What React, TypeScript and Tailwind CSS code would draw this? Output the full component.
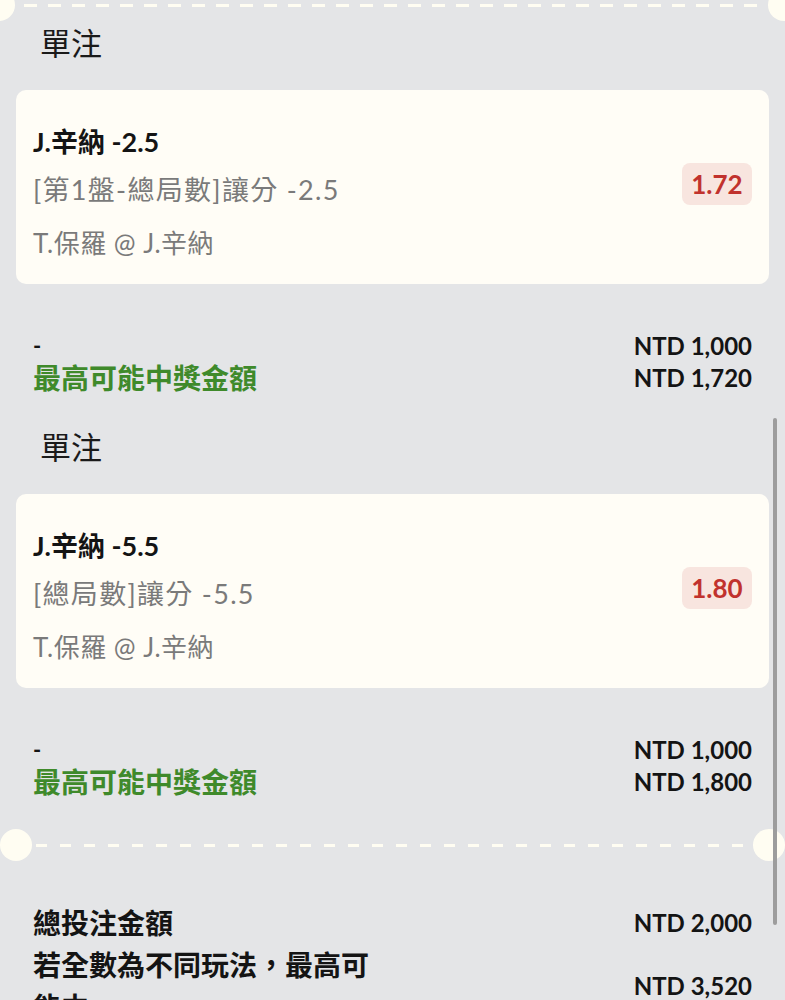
import React from 'react'

const FONT = { fontFamily: 'Lato, "Noto Sans CJK TC", sans-serif' }

interface Bet {
  pick: string
  market: string
  event: string
  odds: string
  stake: string
  payout: string
}

const BETS: Bet[] = [
  {
    pick: 'J.辛納 -2.5',
    market: '[第1盤-總局數]讓分 -2.5',
    event: 'T.保羅 @ J.辛納',
    odds: '1.72',
    stake: 'NTD 1,000',
    payout: 'NTD 1,720',
  },
  {
    pick: 'J.辛納 -5.5',
    market: '[總局數]讓分 -5.5',
    event: 'T.保羅 @ J.辛納',
    odds: '1.80',
    stake: 'NTD 1,000',
    payout: 'NTD 1,800',
  },
]

function Circle() {
  return <div className="h-[32px] w-[32px] flex-none rounded-full bg-[#fffdf2]" />
}

function BetSection({ bet, first }: { bet: Bet; first: boolean }) {
  return (
    <section className={first ? 'pt-[2px]' : 'pt-[33px]'}>
      <h2 className="pl-[24px] text-[31px] leading-[40px] text-[#1a1a1a]">單注</h2>
      <div className="mt-[27px] flex items-center justify-between rounded-[10px] bg-[#fffdf6] pl-[17px] pr-[17px] pt-[36px] pb-[21px]">
        <div>
          <p className="text-[27px] font-bold leading-[32px] text-[#141414]">{bet.pick}</p>
          <p className="mt-[12px] text-[27px] leading-[40px] tracking-[1.3px] text-[#7a7a7a]">{bet.market}</p>
          <p className="mt-[13px] text-[26px] leading-[40px] tracking-[0.5px] text-[#7a7a7a]">{bet.event}</p>
        </div>
        <span className="mb-[21px] flex h-[42px] w-[70px] items-center justify-center rounded-[8px] bg-[#f8e5df] text-[26px] font-bold text-[#c1322d]">
          {bet.odds}
        </span>
      </div>
      <div className="mt-[46px] grid grid-cols-[1fr_auto] px-[17px] font-bold leading-[32px]">
        <span className="text-[22px] text-[#141414]">-</span>
        <span className="text-right text-[24px] text-[#141414]">{bet.stake}</span>
        <span className="text-[28px] text-[#3f8a2b]">最高可能中獎金額</span>
        <span className="text-right text-[24px] text-[#141414]">{bet.payout}</span>
      </div>
    </section>
  )
}

export default function App() {
  return (
    <div className="relative h-[1000px] w-[785px] overflow-hidden bg-[#e4e5e7]" style={FONT}>
      {/* top divider, partly scrolled out */}
      <div className="-mt-[11px] -ml-[17px] -mr-[15px] flex items-center">
        <Circle />
        <div className="h-[3px] flex-1 bg-[repeating-linear-gradient(90deg,transparent_0_9px,#fffdf2_9px_22px,transparent_22px_24px)]" />
        <Circle />
      </div>

      <div className="px-4">
        {BETS.map((bet, i) => (
          <BetSection key={bet.pick} bet={bet} first={i === 0} />
        ))}
      </div>

      <div className="mt-[31px] flex items-center">
        <Circle />
        <div className="h-[3px] flex-1 bg-[repeating-linear-gradient(90deg,transparent_0_4px,#fffdf2_4px_15px,transparent_15px_24px)]" />
        <Circle />
      </div>

      <div className="mt-[41px] grid grid-cols-[345px_1fr] items-center px-[33px] font-bold text-[#141414]">
        <span className="text-[28px] leading-[42px]">總投注金額</span>
        <span className="text-right text-[24px]">NTD 2,000</span>
        <span className="text-[28px] leading-[42px]">若全數為不同玩法，最高可能中:</span>
        <span className="text-right text-[24px]">NTD 3,520</span>
      </div>

      {/* scrollbar */}
      <div className="absolute right-[8px] top-[418px] h-[507px] w-[4px] rounded-full bg-[#9d9d9d]" />
    </div>
  )
}
